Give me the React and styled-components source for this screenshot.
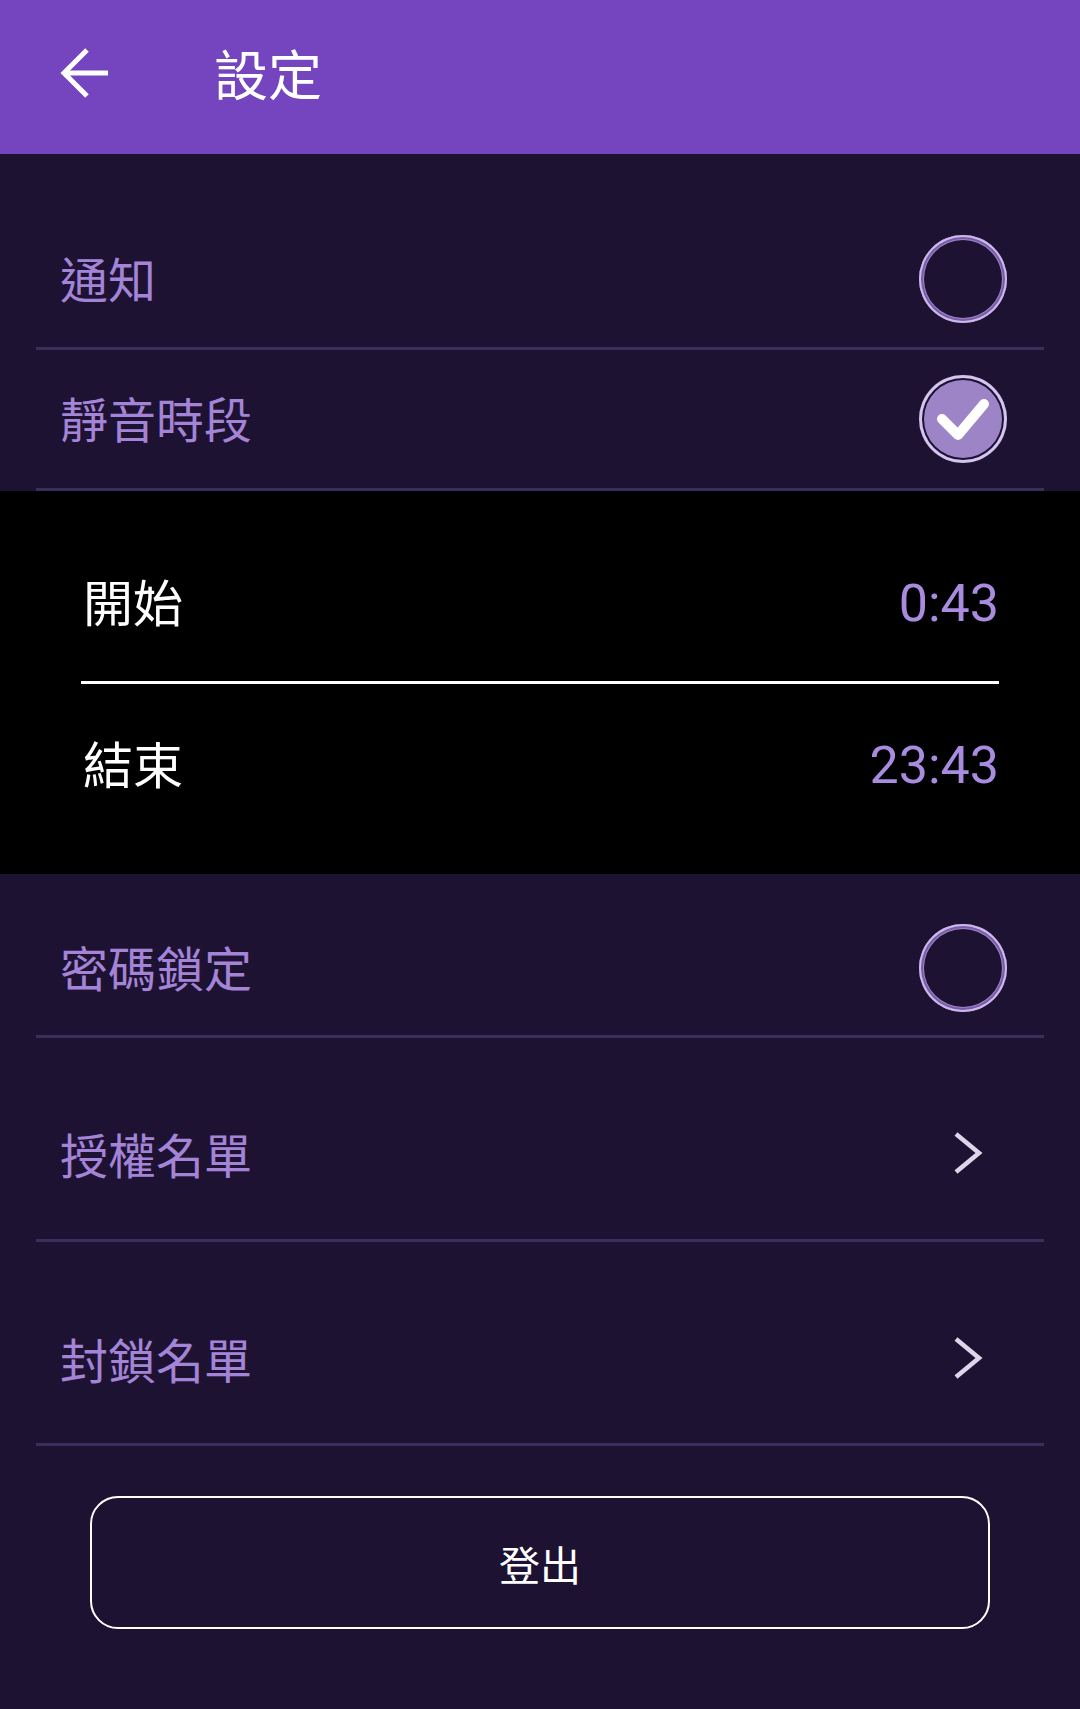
import React from "react";
import styled, { createGlobalStyle } from "styled-components";

const GlobalStyle = createGlobalStyle`
  html, body {
    margin: 0;
    padding: 0;
    background: #1e1233;
  }
  body {
    font-family: "Noto Sans CJK TC", "Noto Sans", sans-serif;
  }
`;

const Page = styled.div`
  min-height: 100vh;
  background: #1e1233;
  display: flex;
  flex-direction: column;
`;

const Header = styled.header`
  height: 154px;
  box-sizing: border-box;
  background: #7445bf;
  display: flex;
  align-items: center;
  padding: 0 0 8px 58px;
`;

const BackIcon = styled.svg`
  width: 52px;
  height: 52px;
  flex: none;
`;

const Title = styled.h1`
  margin: 0 0 0 104px;
  font-size: 54px;
  font-weight: 400;
  color: #ffffff;
  line-height: 1;
`;

const Row = styled.div`
  margin: 0 36px;
  display: flex;
  align-items: center;
  justify-content: space-between;
  padding: ${(p) => p.$top}px 37px ${(p) => p.$bottom}px 24px;
  border-bottom: 3px solid #3a2f5c;
`;

const Label = styled.span`
  font-size: 48px;
  line-height: 88px;
  color: #a384d6;
  margin-top: -4px;
`;

const Toggle = styled.div`
  width: 88px;
  height: 88px;
  flex: none;
  border-radius: 50%;
  display: flex;
  align-items: center;
  justify-content: center;
  background: ${(p) => (p.$on ? "#9c84c6" : "transparent")};
  box-shadow: ${(p) =>
    p.$on
      ? "inset 0 0 0 3px #d3c5ee, inset 0 0 0 5px #1e1233"
      : "inset 0 0 0 2px #cbb9ea, inset 0 0 0 4px #7a5ba8, inset 0 0 0 5px #9c86c8"};
`;

const IconBox = styled.svg`
  width: 88px;
  height: 88px;
  flex: none;
  display: block;
`;

const Schedule = styled.section`
  background: #000;
  padding: 37px 81px 40px;
`;

const TimeRow = styled.div`
  height: 144px;
  display: flex;
  align-items: center;
  justify-content: space-between;
  margin: ${(p) => (p.$first ? "0 0 9px" : "6px 0 0")};
`;

const TimeLabel = styled.span`
  font-size: 50px;
  color: #ffffff;
  line-height: 1;
  margin-left: 2px;
`;

const TimeValue = styled.span`
  font-family: Roboto, "Noto Sans", sans-serif;
  font-size: 52px;
  color: #a98be0;
  line-height: 1;
  padding-top: 8px;
`;

const Rule = styled.div`
  height: 3px;
  background: #ffffff;
`;

const LogoutButton = styled.button`
  margin: 50px 90px 0;
  height: 133px;
  box-sizing: border-box;
  border: 2.5px solid #ffffff;
  border-radius: 28px;
  background: transparent;
  color: #ffffff;
  font-family: "Noto Sans CJK TC", "Noto Sans", sans-serif;
  font-size: 41px;
  cursor: pointer;
`;

const Check = () => (
  <IconBox viewBox="0 0 88 88">
    <path
      d="M23 44 L39 60 L65 29"
      fill="none"
      stroke="#ffffff"
      strokeWidth="10"
      strokeLinecap="round"
      strokeLinejoin="round"
    />
  </IconBox>
);

const Chevron = () => (
  <IconBox viewBox="0 0 88 88">
    <path
      d="M37 23 L60 42 L37 61"
      fill="none"
      stroke="#dcd6e8"
      strokeWidth="4.5"
    />
  </IconBox>
);

export default function App() {
  return (
    <Page>
      <GlobalStyle />
      <Header>
        <BackIcon viewBox="0 0 52 52">
          <path
            d="M50 26 H6 M29 3 L6 26 L29 49"
            fill="none"
            stroke="#ffffff"
            strokeWidth="5"
            strokeLinejoin="miter"
          />
        </BackIcon>
        <Title>設定</Title>
      </Header>

      <Row $top={81} $bottom={24}>
        <Label>通知</Label>
        <Toggle />
      </Row>
      <Row $top={25} $bottom={25}>
        <Label>靜音時段</Label>
        <Toggle $on>
          <Check />
        </Toggle>
      </Row>

      <Schedule>
        <TimeRow $first>
          <TimeLabel>開始</TimeLabel>
          <TimeValue>0:43</TimeValue>
        </TimeRow>
        <Rule />
        <TimeRow>
          <TimeLabel>結束</TimeLabel>
          <TimeValue>23:43</TimeValue>
        </TimeRow>
      </Schedule>

      <Row $top={50} $bottom={23}>
        <Label>密碼鎖定</Label>
        <Toggle />
      </Row>
      <Row $top={73} $bottom={40}>
        <Label>授權名單</Label>
        <Chevron />
      </Row>
      <Row $top={74} $bottom={39}>
        <Label>封鎖名單</Label>
        <Chevron />
      </Row>

      <LogoutButton>登出</LogoutButton>
    </Page>
  );
}
